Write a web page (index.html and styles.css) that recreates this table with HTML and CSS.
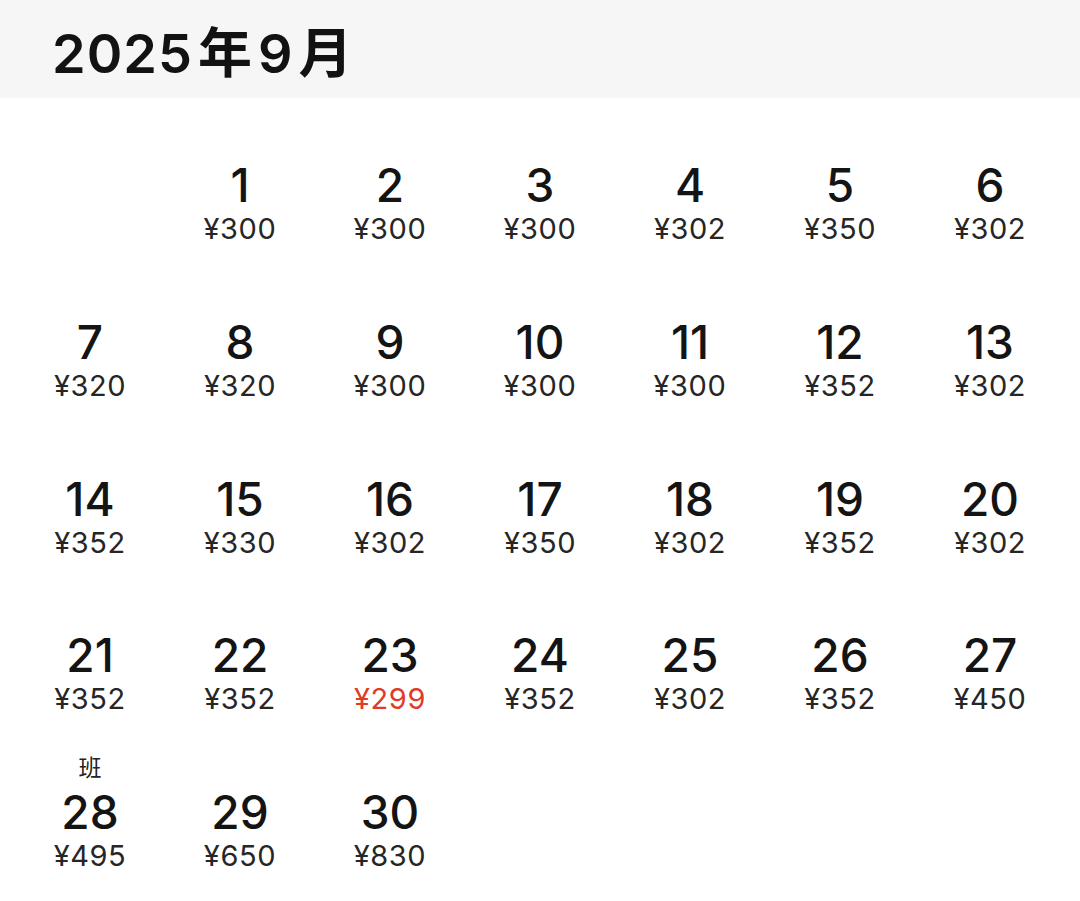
FILE: index.html
```html
<!DOCTYPE html>
<html lang="zh-CN">
<head>
<meta charset="utf-8">
<title>2025年9月</title>
<link rel="stylesheet" href="styles.css">
</head>
<body>
<header class="header"><h1 class="title">2025<span class="cjk">年</span>9<span class="cjk">月</span></h1></header>
<main class="grid">
  <div class="cell empty"></div>
  <div class="cell"><span class="tag"></span><span class="day">1</span><span class="price">¥300</span></div>
  <div class="cell"><span class="tag"></span><span class="day">2</span><span class="price">¥300</span></div>
  <div class="cell"><span class="tag"></span><span class="day">3</span><span class="price">¥300</span></div>
  <div class="cell"><span class="tag"></span><span class="day">4</span><span class="price">¥302</span></div>
  <div class="cell"><span class="tag"></span><span class="day">5</span><span class="price">¥350</span></div>
  <div class="cell"><span class="tag"></span><span class="day">6</span><span class="price">¥302</span></div>

  <div class="cell"><span class="tag"></span><span class="day">7</span><span class="price">¥320</span></div>
  <div class="cell"><span class="tag"></span><span class="day">8</span><span class="price">¥320</span></div>
  <div class="cell"><span class="tag"></span><span class="day">9</span><span class="price">¥300</span></div>
  <div class="cell"><span class="tag"></span><span class="day">10</span><span class="price">¥300</span></div>
  <div class="cell"><span class="tag"></span><span class="day">11</span><span class="price">¥300</span></div>
  <div class="cell"><span class="tag"></span><span class="day">12</span><span class="price">¥352</span></div>
  <div class="cell"><span class="tag"></span><span class="day">13</span><span class="price">¥302</span></div>

  <div class="cell"><span class="tag"></span><span class="day">14</span><span class="price">¥352</span></div>
  <div class="cell"><span class="tag"></span><span class="day">15</span><span class="price">¥330</span></div>
  <div class="cell"><span class="tag"></span><span class="day">16</span><span class="price">¥302</span></div>
  <div class="cell"><span class="tag"></span><span class="day">17</span><span class="price">¥350</span></div>
  <div class="cell"><span class="tag"></span><span class="day">18</span><span class="price">¥302</span></div>
  <div class="cell"><span class="tag"></span><span class="day">19</span><span class="price">¥352</span></div>
  <div class="cell"><span class="tag"></span><span class="day">20</span><span class="price">¥302</span></div>

  <div class="cell"><span class="tag"></span><span class="day">21</span><span class="price">¥352</span></div>
  <div class="cell"><span class="tag"></span><span class="day">22</span><span class="price">¥352</span></div>
  <div class="cell"><span class="tag"></span><span class="day">23</span><span class="price low">¥299</span></div>
  <div class="cell"><span class="tag"></span><span class="day">24</span><span class="price">¥352</span></div>
  <div class="cell"><span class="tag"></span><span class="day">25</span><span class="price">¥302</span></div>
  <div class="cell"><span class="tag"></span><span class="day">26</span><span class="price">¥352</span></div>
  <div class="cell"><span class="tag"></span><span class="day">27</span><span class="price">¥450</span></div>

  <div class="cell"><span class="tag">班</span><span class="day">28</span><span class="price">¥495</span></div>
  <div class="cell"><span class="tag"></span><span class="day">29</span><span class="price">¥650</span></div>
  <div class="cell"><span class="tag"></span><span class="day">30</span><span class="price">¥830</span></div>
</main>
</body>
</html>
```
FILE: styles.css
```css
* { box-sizing: border-box; }
html, body { margin: 0; padding: 0; background: #ffffff; }
body {
  font-family: Inter, "Noto Sans CJK SC", sans-serif;
  color: #111111;
}
.header {
  height: 98px;
  background: #f6f6f6;
  display: flex;
  align-items: center;
  padding-left: 52px;
}
.title {
  margin: 0;
  font-size: 54px;
  font-weight: 600;
  letter-spacing: 1px;
  color: #121212;
}
.title .cjk { margin: 0 5px; font-weight: 700; }
.grid {
  display: grid;
  grid-template-columns: repeat(7, 150px);
  grid-auto-rows: 128px;
  row-gap: 28.75px;
  padding: 23px 15px 0;
}
.cell {
  display: flex;
  flex-direction: column;
  align-items: center;
}
.tag {
  height: 40px;
  line-height: 40px;
  font-size: 23px;
  color: #222222;
}
.day {
  height: 48px;
  line-height: 48px;
  font-size: 46px;
  font-weight: 500;
  color: #141414;
}
.price {
  height: 40px;
  line-height: 40px;
  font-size: 29px;
  font-weight: 400;
  letter-spacing: 0.6px;
  color: #262626;
}
.price.low { color: #e03b27; }
```
